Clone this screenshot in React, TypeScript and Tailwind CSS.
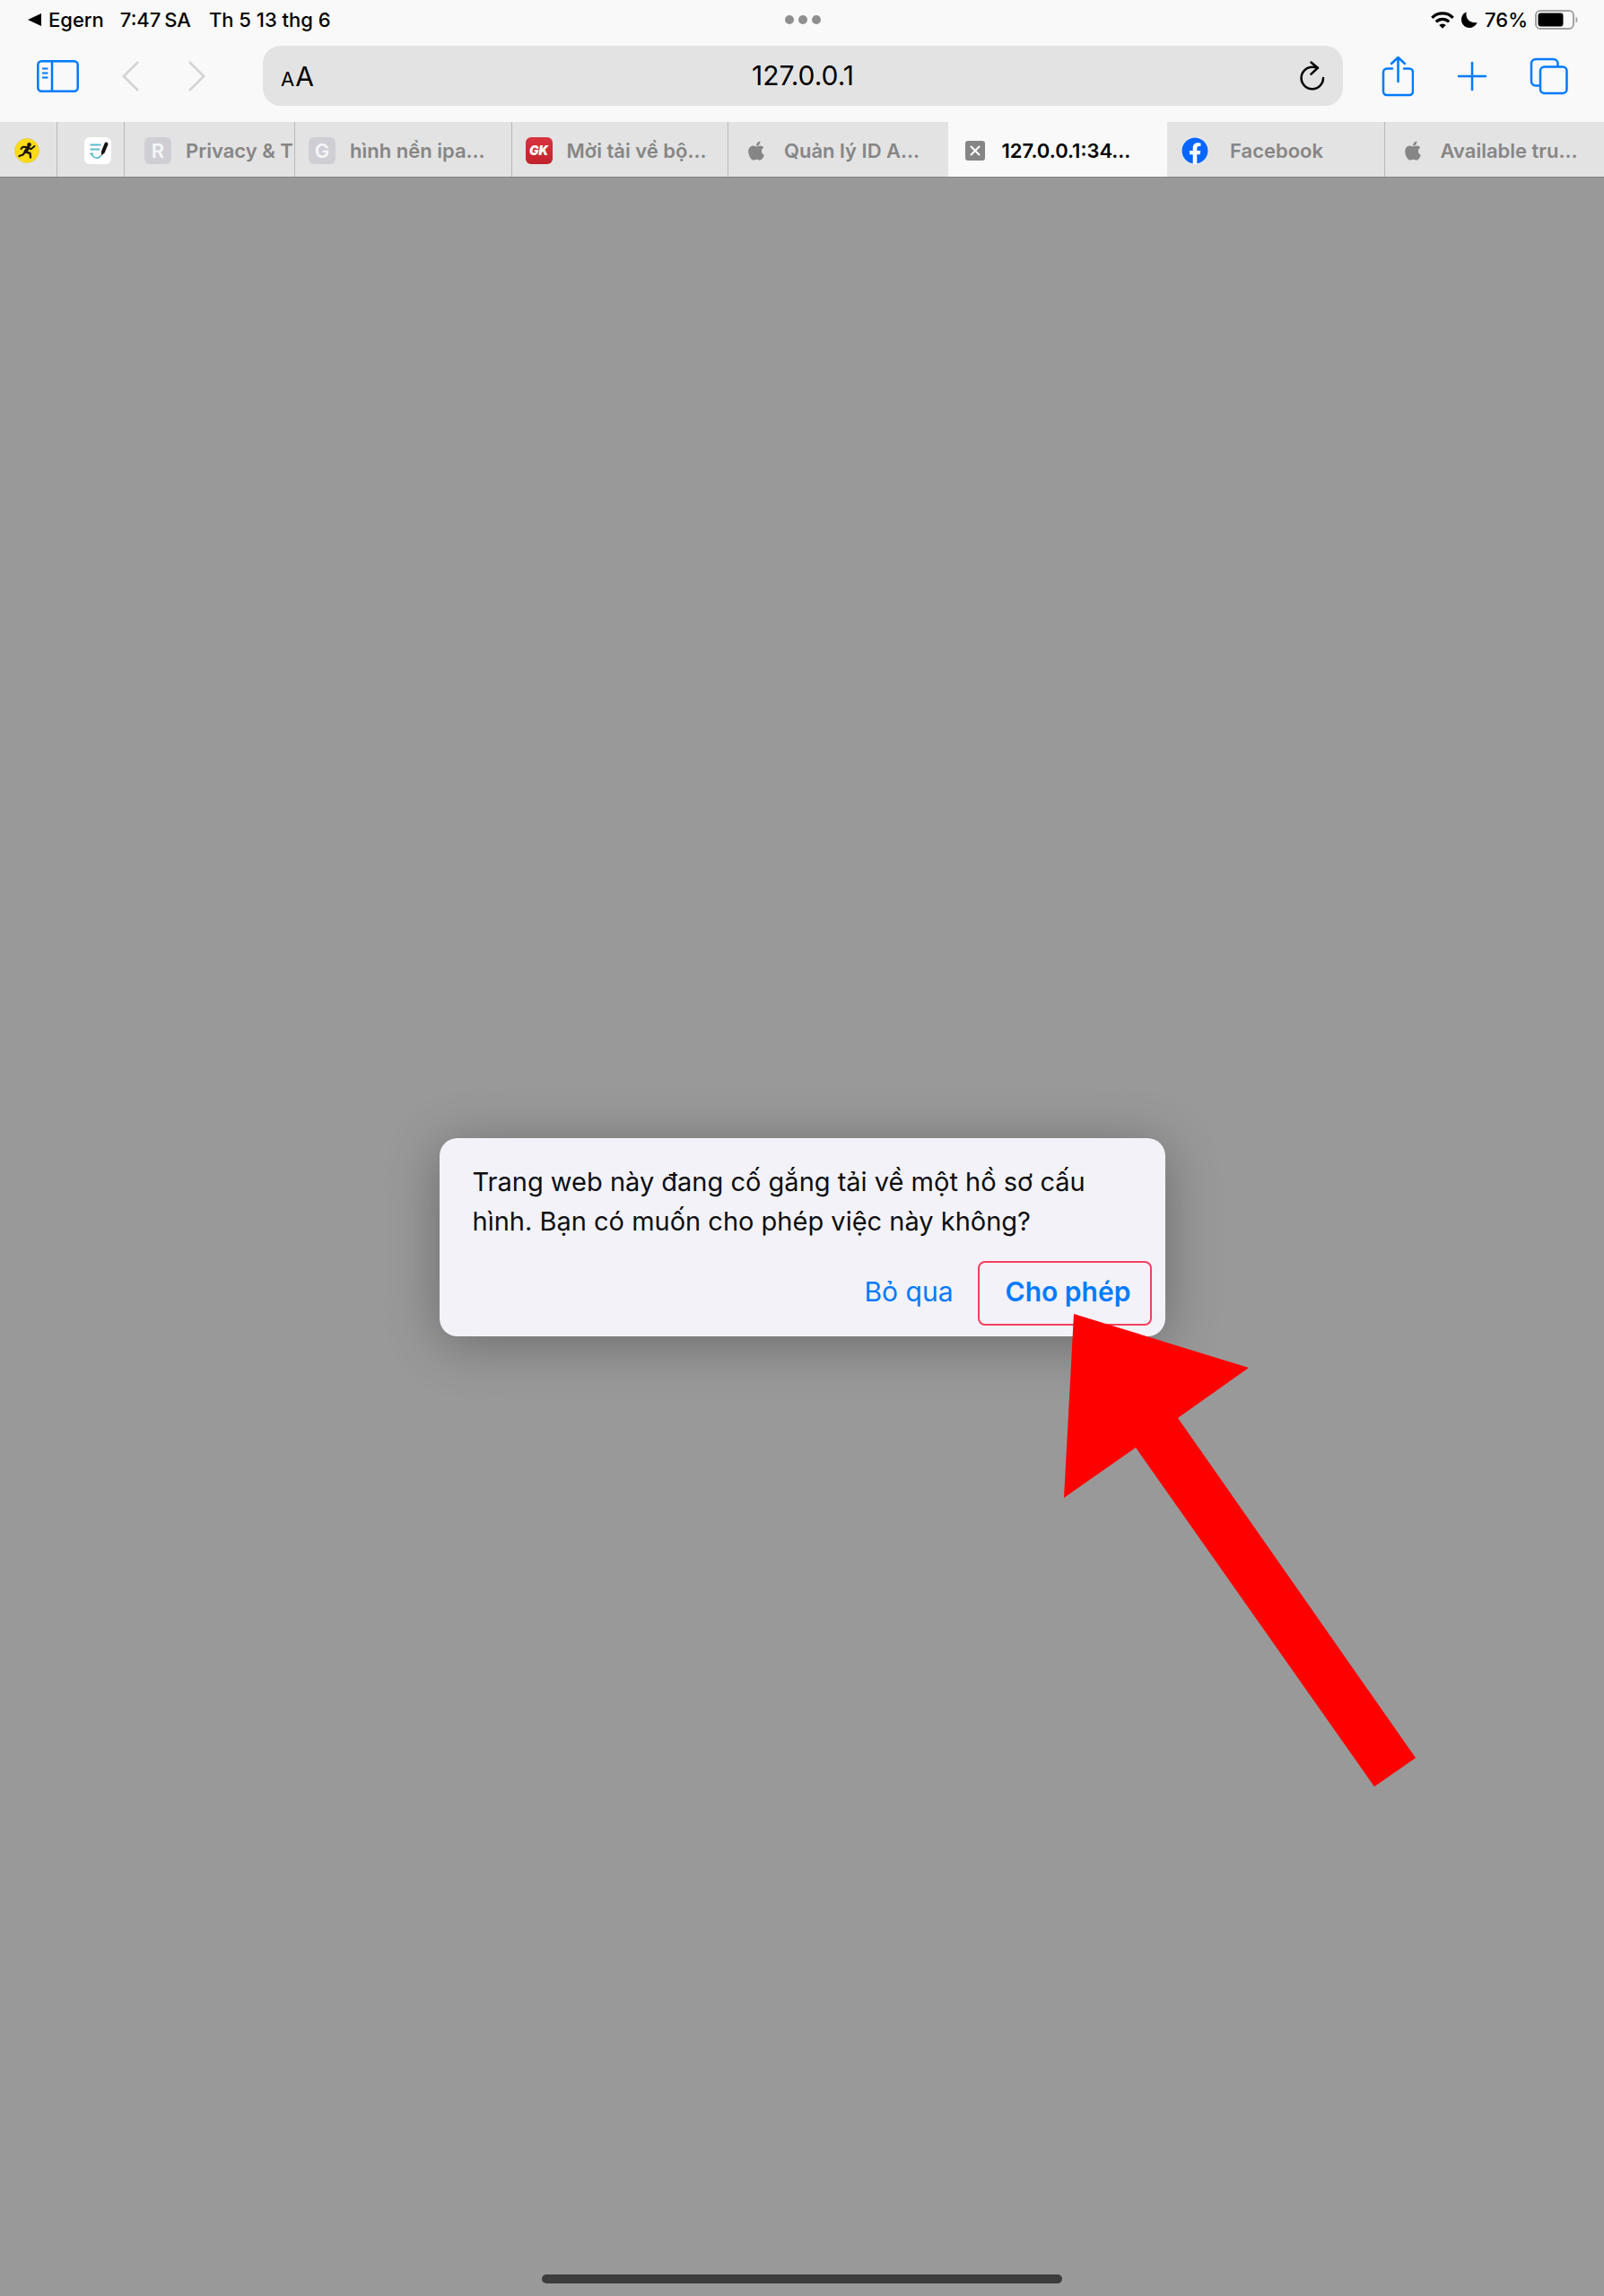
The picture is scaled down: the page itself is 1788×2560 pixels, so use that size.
import type { ReactNode } from "react";
import { FaApple, FaFacebook } from "react-icons/fa";

function LetterIcon({ letter }: { letter: string }) {
  return (
    <span className="flex size-[30px] items-center justify-center rounded-md bg-[#cfced5] text-[22px] leading-none font-semibold text-[#f6f6f8]">
      {letter}
    </span>
  );
}

function RunnerIcon() {
  return (
    <svg viewBox="0 0 28 28" className="size-7" fill="none" stroke="#1c1708" strokeLinecap="round" strokeLinejoin="round" aria-hidden="true">
      <circle cx="14" cy="14" r="13.500" fill="#fbdb17" stroke="#e9cf55" />
      <circle cx="16.500" cy="7.200" r="2.300" fill="#1c1708" stroke="none" />
      <path d="M15.500 10.500 12.500 15" strokeWidth="4" />
      <path d="m15.500 10.500 3 1.800 4-3.300M14.500 10l-5-.3L7.500 12" strokeWidth="2" />
      <path d="m13 15.500 4.500 1.500.5 4.500M12 15.500 9.500 18.500 5.500 20" strokeWidth="2.400" />
    </svg>
  );
}

function NotesIcon() {
  return (
    <svg viewBox="0 0 30 30" className="size-[30px]" fill="none" aria-hidden="true">
      <rect width="30" height="30" rx="6" fill="#fff" />
      <path d="M6.500 8.500h12M6.500 13.500h10.500" stroke="#5fb9cb" strokeWidth="1.800" />
      <path d="M6.500 18.500H10M8 18.500c1.500 3.500 4 5 7 4.500 2-.4 3-1.500 3.500-3" stroke="#5fb9cb" strokeWidth="1.800" />
      <path d="M24.500 7.500 21 16" stroke="#111" strokeWidth="4" strokeLinecap="round" />
      <path d="m19 16 3.500 1.500-3.500 3z" fill="#111" />
    </svg>
  );
}

type Tab = { id: string; label: string; icon: ReactNode; box: string; active?: boolean };

const tabs: Tab[] = [
  { id: "runner", label: "", box: "w-16 shrink-0 border-r pl-4", icon: <RunnerIcon /> },
  { id: "notes", label: "", box: "w-[75px] shrink-0 border-r pl-[30px]", icon: <NotesIcon /> },
  { id: "privacy", label: "Privacy & T", box: "w-[190px] shrink-0 border-r pl-[22px] gap-4", icon: <LetterIcon letter="R" /> },
  { id: "wallpaper", label: "hình nền ipa...", box: "flex-1 border-r pl-[15px] gap-4", icon: <LetterIcon letter="G" /> },
  {
    id: "gk",
    label: "Mời tải về bộ...",
    box: "flex-1 border-r pl-[15px] gap-4",
    icon: (
      <span className="flex size-[30px] items-center justify-center rounded-md bg-linear-to-b from-[#d8343f] to-[#c0222b] text-[14px] leading-none font-black text-white italic">
        GK
      </span>
    ),
  },
  { id: "appleid", label: "Quản lý ID A...", box: "flex-1 pl-[19px] gap-[19px]", icon: <FaApple className="size-6" /> },
  {
    id: "local",
    label: "127.0.0.1:34...",
    active: true,
    box: "flex-1 pl-[19px] gap-[19px]",
    icon: (
      <svg viewBox="0 0 22 22" className="size-[22px]" aria-hidden="true">
        <rect width="22" height="22" rx="3" fill="#868686" />
        <path d="m6.500 6.500 9 9m0-9-9 9" stroke="#fff" strokeWidth="2" strokeLinecap="round" />
      </svg>
    ),
  },
  {
    id: "facebook",
    label: "Facebook",
    box: "flex-1 border-r pl-4 gap-6",
    icon: (
      <span className="flex size-[30px] items-center justify-center rounded-full bg-white text-[30px] text-[#0866ff]">
        <FaFacebook />
      </span>
    ),
  },
  { id: "available", label: "Available tru...", box: "flex-1 pl-[19px] gap-[19px]", icon: <FaApple className="size-6" /> },
];

function StatusBar() {
  return (
    <div className="grid h-11 grid-cols-3 items-center pr-7 pl-[31px] text-[22px] leading-none font-medium">
      <div className="flex items-center">
        <svg viewBox="0 0 15 14" className="w-[15px]" aria-hidden="true">
          <path d="M0 7 15 0v14z" />
        </svg>
        <span className="ml-2">Egern</span>
        <span className="ml-[18px]">7:47{"\u2009"}SA</span>
        <span className="ml-5">Th 5 13 thg 6</span>
      </div>
      <div className="flex justify-center gap-[5px]">
        <i className="size-[10px] rounded-full bg-[#8f8f8f]" />
        <i className="size-[10px] rounded-full bg-[#8f8f8f]" />
        <i className="size-[10px] rounded-full bg-[#8f8f8f]" />
      </div>
      <div className="flex items-center justify-end">
        <svg viewBox="0 0 26 19" className="w-[26px]" fill="none" stroke="#000" strokeWidth="3.200" aria-hidden="true">
          <path d="M1.300 6.800a16.500 16.500 0 0 1 23.400 0" />
          <path d="M5.800 11.400a10.200 10.200 0 0 1 14.400 0" />
          <path d="M13 18.700 9.200 15a5.400 5.400 0 0 1 7.600 0z" fill="#000" stroke="none" />
        </svg>
        <svg viewBox="0 0 18 18" className="ml-2 w-[18px]" aria-hidden="true">
          <path d="M5.600.3C4.300 7.500 9 13.400 17.700 12.200 15.800 16 12.500 18 9 18c-5 0-9-3.800-9-8.900C0 5 2.200 1.800 5.600.3z" />
        </svg>
        <span className="ml-2">76%</span>
        <svg viewBox="0 0 49 22" className="ml-2 w-[49px]" fill="none" aria-hidden="true">
          <rect x="1" y="1" width="42" height="20" rx="5" stroke="#a2a2a2" strokeWidth="2" />
          <rect x="3.500" y="3.500" width="28" height="15" rx="3" fill="#000" />
          <path d="M45.500 7.500c2.600 1 2.600 6 0 7z" fill="#a2a2a2" />
        </svg>
      </div>
    </div>
  );
}

function Toolbar() {
  return (
    <div className="flex items-center px-10 pt-[7px] pb-[18px] text-[#007aff]">
      <button type="button" aria-label="Thanh bên">
        <svg viewBox="0 0 48 38" className="w-12" fill="none" stroke="currentColor" strokeWidth="2.500" aria-hidden="true">
          <rect x="2.300" y="2.300" width="44.400" height="33.400" rx="4" />
          <path d="M18 2v34" />
          <path d="M7 10.500h6.500M7 15.500h6.500M7 20.500h6.500" strokeWidth="1.800" />
        </svg>
      </button>
      <button type="button" aria-label="Quay lại" className="ml-12">
        <svg viewBox="0 0 20 34" className="w-5" fill="none" stroke="#d3d3d3" strokeWidth="2.500" aria-hidden="true">
          <path d="M18 1 1.800 17 18 33" />
        </svg>
      </button>
      <button type="button" aria-label="Tiến" className="ml-[53px]">
        <svg viewBox="0 0 20 34" className="w-5" fill="none" stroke="#d3d3d3" strokeWidth="2.500" aria-hidden="true">
          <path d="M2 1l16.200 16L2 33" />
        </svg>
      </button>
      <div className="ml-16 flex h-[67px] flex-1 items-center rounded-[20px] bg-[#e3e3e3] px-5 text-black">
        <button type="button" aria-label="Cỡ chữ" className="flex w-10 items-baseline gap-px text-[30px] leading-none">
          <span className="text-[22px]">A</span>A
        </button>
        <input
          type="text"
          aria-label="Địa chỉ"
          defaultValue="127.0.0.1"
          className="min-w-0 flex-1 bg-transparent text-center text-[30px] outline-none"
        />
        <button type="button" aria-label="Tải lại" className="flex w-10 justify-end">
          <svg viewBox="0 0 28 34" className="w-7" fill="none" stroke="#000" strokeWidth="2.500" aria-hidden="true">
            <path d="M26 19a12.200 12.200 0 1 1-12.200-12.200q3 0 6 .8" strokeLinecap="round" />
            <path d="m12.500 1.500 7.500 6.200-7.500 7" strokeLinecap="round" strokeLinejoin="round" />
          </svg>
        </button>
      </div>
      <button type="button" aria-label="Chia sẻ" className="ml-[43px]">
        <svg viewBox="0 0 36 46" className="w-9" fill="none" stroke="currentColor" strokeWidth="2.500" strokeLinecap="round" strokeLinejoin="round" aria-hidden="true">
          <path d="M12 14.500H6a4 4 0 0 0-4 4v21.500a4 4 0 0 0 4 4h25a4 4 0 0 0 4-4V18.500a4 4 0 0 0-4-4h-6" />
          <path d="M18.500 29V2M11 9l7.500-7L26 9" />
        </svg>
      </button>
      <button type="button" aria-label="Thẻ mới" className="ml-12">
        <svg viewBox="0 0 34 34" className="w-[34px]" fill="none" stroke="currentColor" strokeWidth="2.500" strokeLinecap="round" aria-hidden="true">
          <path d="M17 2v30M2 17h30" />
        </svg>
      </button>
      <button type="button" aria-label="Tất cả các thẻ" className="ml-[47px]">
        <svg viewBox="0 0 43 42" className="w-[43px]" fill="none" stroke="currentColor" strokeWidth="2.500" aria-hidden="true">
          <path d="M11 31.500H7a5 5 0 0 1-5-5V7a5 5 0 0 1 5-5h19.500a5 5 0 0 1 5 5v3.500" />
          <rect x="12" y="10.500" width="29.500" height="29.500" rx="4.500" />
        </svg>
      </button>
    </div>
  );
}

function TabBar() {
  return (
    <div role="tablist" className="flex h-[62px] border-b border-[#808080]">
      {tabs.map((tab) => (
        <button
          key={tab.id}
          type="button"
          role="tab"
          aria-selected={!!tab.active}
          aria-label={tab.label || tab.id}
          className={`flex min-w-0 items-center overflow-hidden border-[#b9b9b9] pt-0.5 text-[22px] leading-8 font-semibold whitespace-nowrap ${tab.box} ${
            tab.active ? "text-black" : "bg-[#e3e3e3] text-[#868686]"
          }`}
        >
          <span className="shrink-0">{tab.icon}</span>
          {tab.label && <span>{tab.label}</span>}
        </button>
      ))}
    </div>
  );
}

function Dialog() {
  return (
    <section
      role="alertdialog"
      aria-labelledby="dialog-message"
      className="relative w-[809px] rounded-[20px] bg-[#f3f2f8] pt-[27px] pr-[15px] pb-3 pl-[37px] shadow-[0_8px_60px_rgba(0,0,0,0.3)]"
    >
      <p id="dialog-message" className="text-[29px] leading-[44px] text-[#0d0d10]">
        Trang web này đang cố gắng tải về một hồ sơ cấu
        <br />
        hình. Bạn có muốn cho phép việc này không?
      </p>
      <div className="mt-[22px] flex justify-end gap-[27px] text-[30px] leading-none text-[#007aff]">
        <button type="button" className="pb-1">Bỏ qua</button>
        <button
          type="button"
          className="h-[72px] w-[194px] rounded-lg border-2 border-[#f5405f] pb-1 pl-2 font-semibold"
        >
          Cho phép
        </button>
      </div>
      <svg
        viewBox="0 0 392 527"
        className="pointer-events-none absolute top-[196px] left-[696px] w-[392px]"
        fill="#ff0000"
        aria-hidden="true"
      >
        <path d="M11 0 206 60 127 116 392 495 346 527 80 149 0 205z" />
      </svg>
    </section>
  );
}

export default function App() {
  return (
    <div className="flex min-h-screen flex-col overflow-hidden bg-[#999999] font-['Inter','Noto_Sans',sans-serif] text-black">
      <header className="bg-[#f9f9f9]">
        <StatusBar />
        <Toolbar />
        <TabBar />
      </header>
      <main className="flex flex-1 items-center justify-center pt-6">
        <Dialog />
      </main>
      <footer className="flex justify-center pb-[14px]">
        <div className="h-[10px] w-[580px] rounded-full bg-[#3c3c3c]" />
      </footer>
    </div>
  );
}
